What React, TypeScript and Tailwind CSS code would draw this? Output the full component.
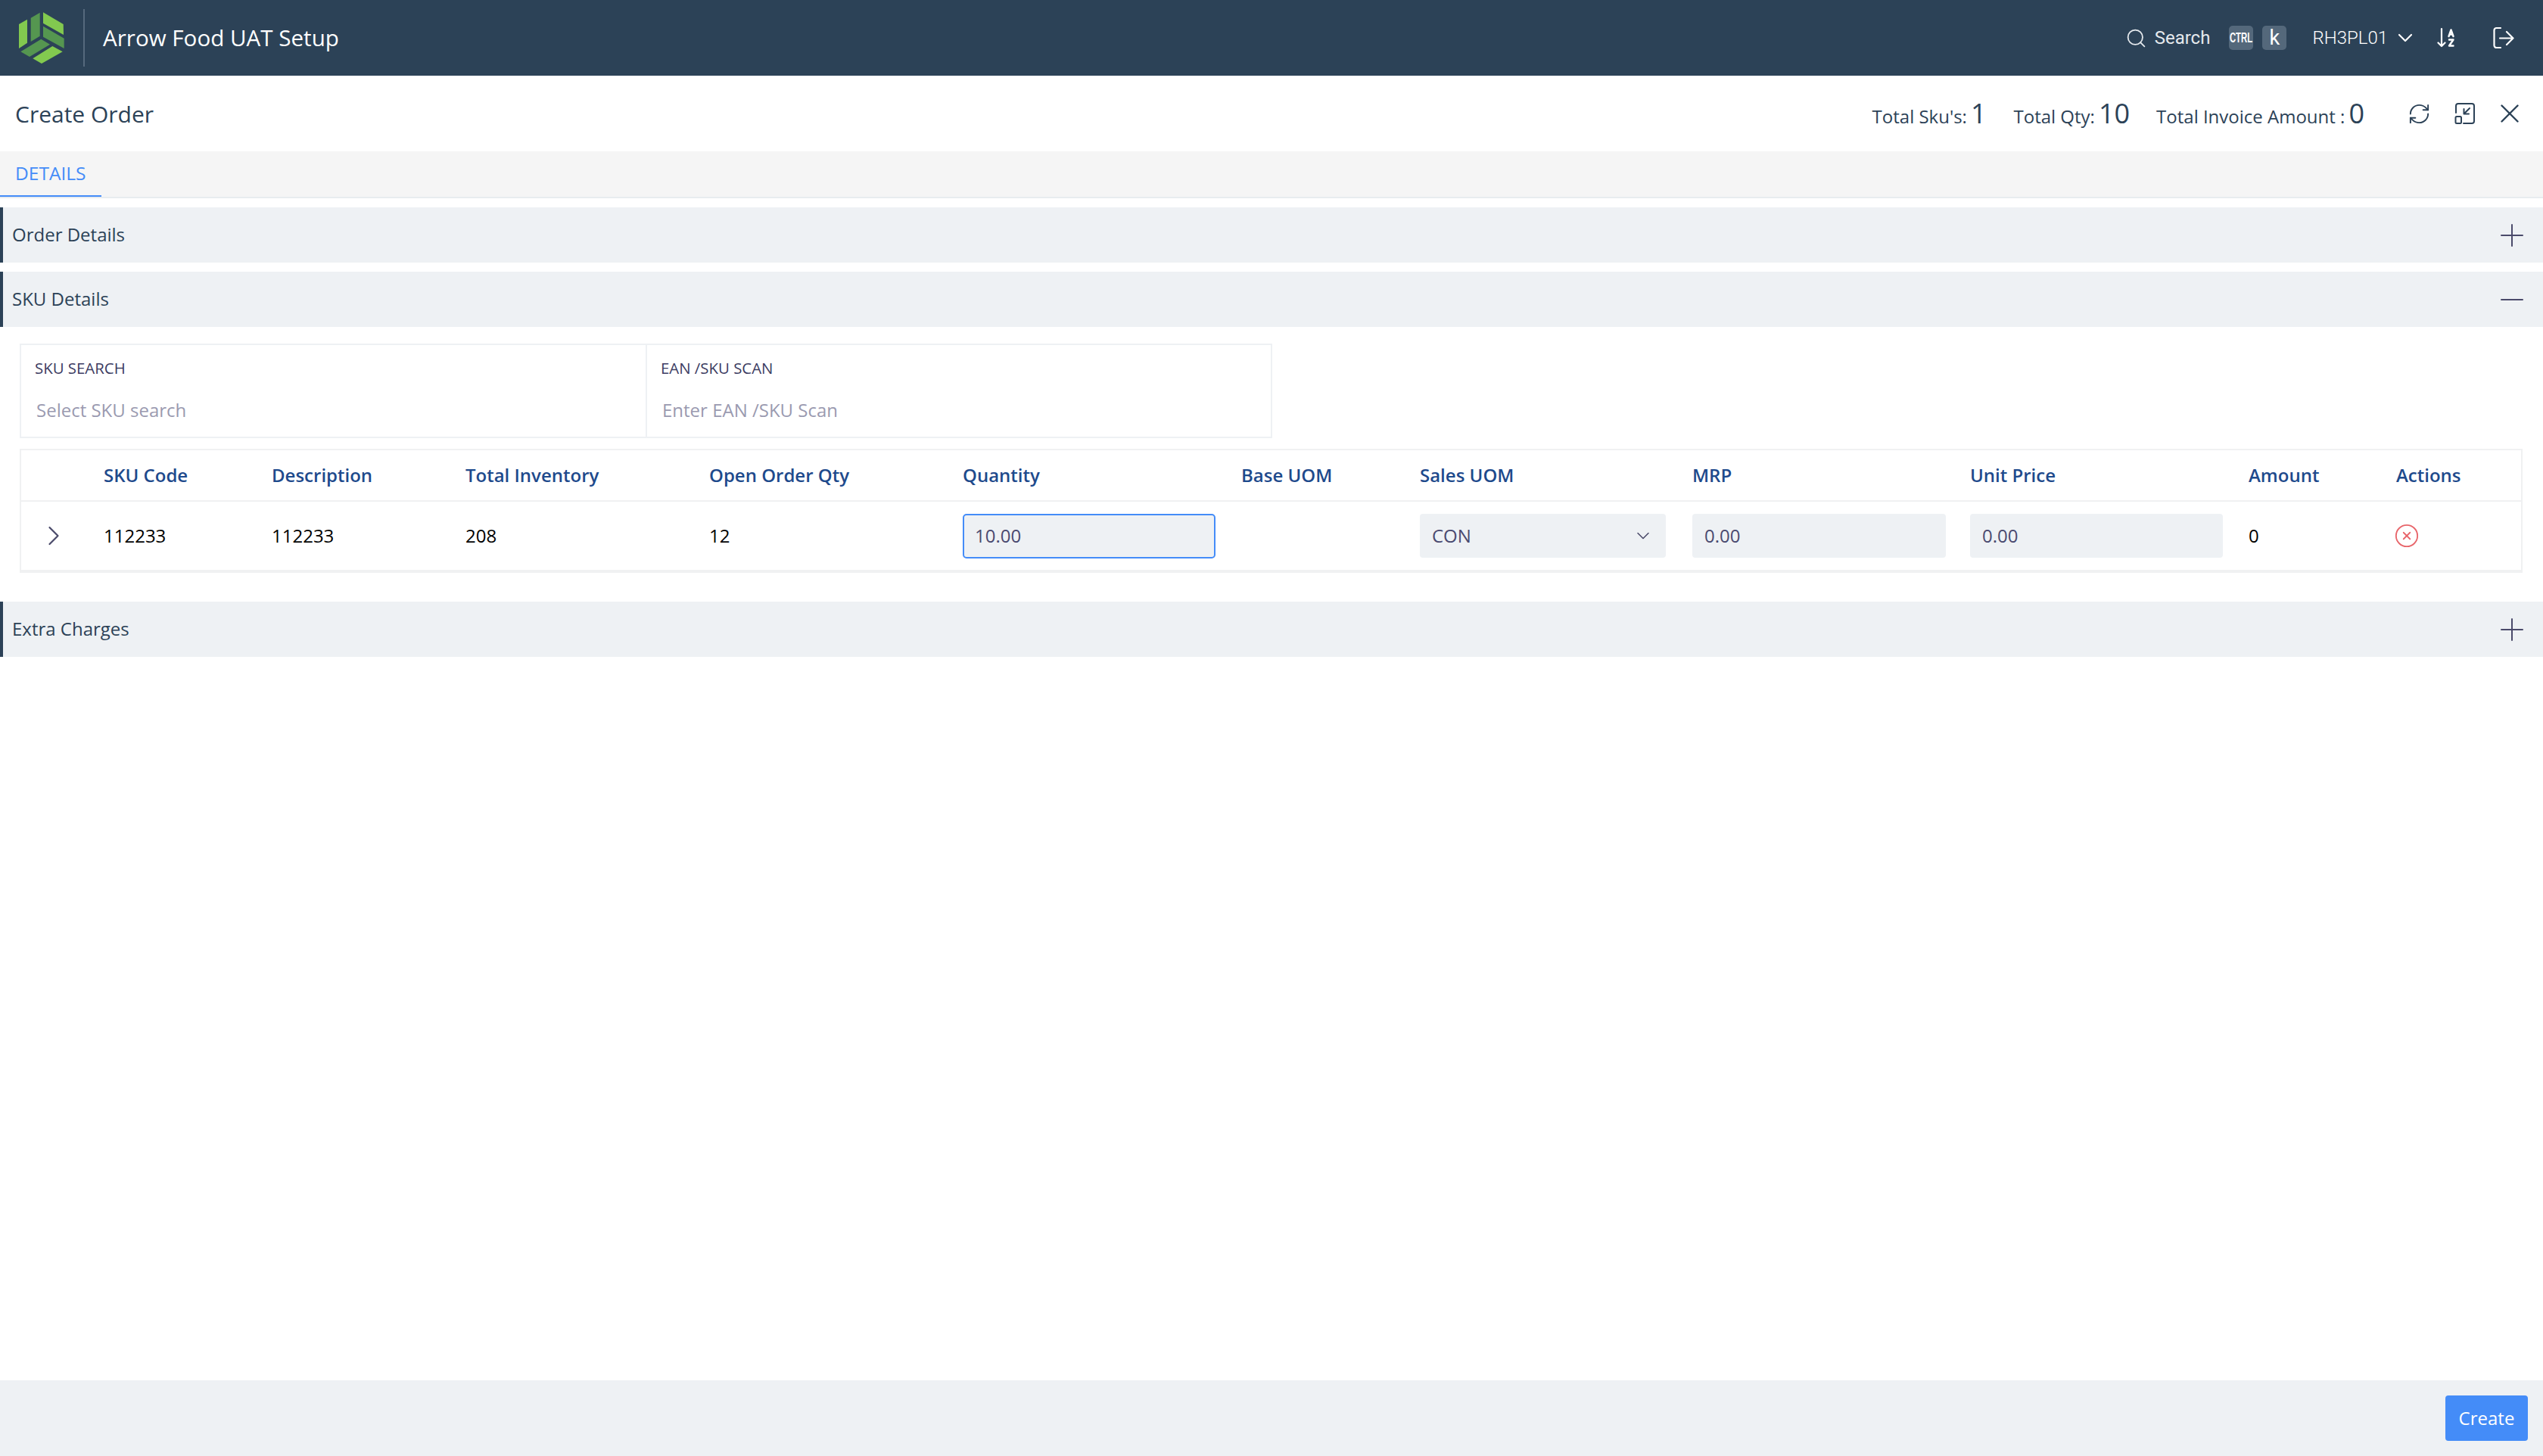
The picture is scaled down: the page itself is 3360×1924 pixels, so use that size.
import { ChevronDown, ChevronRight, Minus, Plus, RefreshCw, Search, X, CircleX } from 'lucide-react';

const gridCols =
  'grid grid-cols-[109px_222px_256px_322px_335px_368px_236px_360px_367px_368px_195px_1fr]';

function Logo() {
  return (
    <svg viewBox="24 16 62 69" className="ml-[24px] h-[69px] w-[62px] shrink-0">
      <polygon points="25,32 36,25.7 36,56.7 25,64" fill="#82c94f" />
      <polygon points="40.7,23.7 52.7,16.7 52.7,47.7 40.7,55" fill="#559650" />
      <polygon points="57,16.3 83.7,32 84,46 57,30.7" fill="#82c94f" />
      <polygon points="57,34.7 84.7,50.7 84.7,64 57,48.7" fill="#559650" />
      <polygon points="27.3,68.3 54.3,51.7 66,58.7 39,75" fill="#559650" />
      <polygon points="43.3,77.3 69.3,61 82.7,68.3 55,84" fill="#82c94f" />
    </svg>
  );
}

function SortIcon() {
  return (
    <svg viewBox="0 0 24 28" className="h-[28px] w-[24px]" fill="none" stroke="#fff" strokeWidth="2.2" strokeLinecap="round" strokeLinejoin="round">
      <path d="M6 2v23M1.5 20.5 6 25l4.5-4.5" />
      <path d="M15.5 12 18.500 3.500l3 8.500M16.500 9.500h4" strokeWidth="2.4" />
      <path d="M16 16.500h5.500l-5.500 8h5.500" strokeWidth="2.4" />
    </svg>
  );
}

function LogoutIcon() {
  return (
    <svg viewBox="0 0 28 30" className="h-[30px] w-[28px]" fill="none" stroke="#fff" strokeWidth="2.2" strokeLinecap="round" strokeLinejoin="round">
      <path d="M10 2H4.500A3 3 0 0 0 1.500 5v20a3 3 0 0 0 3 3H10" />
      <path d="M9 15.500h17.500M18 7l8.500 8.500L18 24" />
    </svg>
  );
}

function MinimizeIcon() {
  return (
    <svg viewBox="0 0 28 28" className="h-[28px] w-[28px]" fill="none" stroke="#2c4257" strokeWidth="2" strokeLinecap="round" strokeLinejoin="round">
      <path d="M2 13V4a3 3 0 0 1 3-3h18a3 3 0 0 1 3 3v20a3 3 0 0 1-3 3H12" />
      <rect x="1.500" y="18" width="7.500" height="9" rx="1.500" />
      <path d="M20 7l-7.500 7.500M12.500 8v6.500H19" />
    </svg>
  );
}

function SectionBar({ title, open }: { title: string; open?: boolean }) {
  return (
    <div className="flex h-[73px] items-center justify-between border-l-[4px] border-[#2c4257] bg-[#eef1f4] pr-[17px] pl-[12px]">
      <span className="-mt-[1px] text-[24px] font-medium text-[#2c4257]">{title}</span>
      {open ? (
        <Minus className="h-[48px] w-[48px] text-[#4a4a6a]" strokeWidth={1} />
      ) : (
        <Plus className="h-[48px] w-[48px] text-[#4a4a6a]" strokeWidth={1} />
      )}
    </div>
  );
}

function Stat({ label, value, className }: { label: string; value: string; className: string }) {
  return (
    <div className={`mt-[4px] flex items-baseline ${className}`}>
      <span className="text-[24px] text-[#2c4257]">{label}</span>
      <span className="ml-[5px] text-[36px] leading-none font-medium text-[#2c4257]">{value}</span>
    </div>
  );
}

function SearchField({ label, placeholder, className }: { label: string; placeholder: string; className: string }) {
  return (
    <div className={`flex flex-col pl-[18px] ${className}`}>
      <span className="mt-[18px] text-[20.400px] leading-[24px] font-medium text-[#3c3c62]">{label}</span>
      <span className="mt-[28px] pl-[2px] text-[24px] leading-[32px] text-[#9a9ab0]">{placeholder}</span>
    </div>
  );
}

export default function App() {
  const headers = ['', 'SKU Code', 'Description', 'Total Inventory', 'Open Order Qty', 'Quantity', 'Base UOM', 'Sales UOM', 'MRP', 'Unit Price', 'Amount', 'Actions'];

  return (
    <div className="flex h-screen flex-col bg-white font-['Open_Sans',sans-serif]">
      <header className="flex h-[100px] shrink-0 items-center bg-[#2c4257] text-white">
        <Logo />
        <div className="ml-[24px] h-[76px] w-[2px] bg-[#56697d]" />
        <span className="ml-[24px] text-[29.600px] font-normal">Arrow Food UAT Setup</span>
        <div className="ml-auto flex items-center pr-[38px]">
          <Search className="h-[29px] w-[29px] text-[#e5e9ed]" strokeWidth={1.500} />
          <span className="ml-[10px] font-['Roboto',sans-serif] text-[24px] text-[#e5e9ed]">Search</span>
          <span className="ml-[25px] flex h-[32px] w-[32px] items-center justify-center rounded-[5px] bg-[#54687b]">
            <span className="scale-x-[0.63] font-['Liberation_Sans',sans-serif] text-[18px] font-bold">CTRL</span>
          </span>
          <span className="ml-[12px] flex h-[32px] w-[32px] items-center justify-center rounded-[5px] bg-[#54687b] font-['Roboto',sans-serif] text-[27px]">k</span>
          <span className="ml-[34px] font-['Roboto',sans-serif] text-[24px] font-light">RH3PL01</span>
          <ChevronDown className="ml-[7px] h-[32px] w-[32px]" strokeWidth={1.600} />
          <div className="ml-[26px]"><SortIcon /></div>
          <div className="ml-[50px]"><LogoutIcon /></div>
        </div>
      </header>

      <div className="flex h-[100px] shrink-0 items-center pr-[23px] pl-[20px]">
        <h1 className="text-[30px] font-medium text-[#2c4257]">Create Order</h1>
        <Stat className="ml-auto" label="Total Sku's:" value="1" />
        <Stat className="ml-[36px]" label="Total Qty:" value="10" />
        <Stat className="ml-[35px]" label="Total Invoice Amount :" value="0" />
        <RefreshCw className="ml-[57px] h-[31px] w-[31px] text-[#2c4257]" strokeWidth={1.500} />
        <div className="ml-[31px]"><MinimizeIcon /></div>
        <X className="ml-[24px] h-[42px] w-[42px] text-[#2c4257]" strokeWidth={1.400} />
      </div>

      <div className="flex h-[62px] shrink-0 border-b-[2px] border-[#e8ecef] bg-[#f5f5f5]">
        <div className="flex h-[60px] w-[134px] items-center border-b-[2px] border-[#448cf8] pl-[20px] text-[24.500px] font-medium text-[#448cf8]">DETAILS</div>
      </div>

      <div className="mt-[12px] flex flex-col gap-[12px]">
        <SectionBar title="Order Details" />
        <SectionBar title="SKU Details" open />
      </div>

      <div className="mt-[22px] ml-[26px] flex h-[125px] w-[1655px] border-[2px] border-[#eef1f4]">
        <SearchField className="w-[827px] border-r-[2px] border-[#eef1f4]" label="SKU SEARCH" placeholder="Select SKU search" />
        <SearchField className="flex-1" label="EAN /SKU SCAN" placeholder="Enter EAN /SKU Scan" />
      </div>

      <div className="mt-[14px] mr-[27px] ml-[26px] border-x-[2px] border-t-[2px] border-b-[4px] border-[#f0f1f2]">
        <div className={`${gridCols} h-[68px] items-center border-b-[2px] border-[#f0f1f2] text-[24px] font-semibold text-[#1e4a8c]`}>
          {headers.map((h) => (
            <span key={h}>{h}</span>
          ))}
        </div>
        <div className={`${gridCols} h-[90px] items-center text-[24px] text-black`}>
          <ChevronRight className="ml-[21px] h-[44px] w-[44px] text-[#4a4a6a]" strokeWidth={1.200} />
          <span>112233</span>
          <span>112233</span>
          <span>208</span>
          <span>12</span>
          <div className="flex h-[59px] w-[334px] items-center rounded-[5px] border-[2px] border-[#448cf8] bg-[#eef1f4] pl-[14px] text-[#4a4a70]">10.00</div>
          <span />
          <div className="flex h-[58px] w-[325px] items-center justify-between rounded-[4px] bg-[#eef1f4] pr-[16px] pl-[16px] text-[#4a4a70]">
            CON
            <ChevronDown className="h-[28px] w-[28px] text-[#4a4a6a]" strokeWidth={1.300} />
          </div>
          <div className="flex h-[58px] w-[335px] items-center rounded-[4px] bg-[#eef1f4] pl-[16px] text-[#4a4a70]">0.00</div>
          <div className="flex h-[58px] w-[334px] items-center rounded-[4px] bg-[#eef1f4] pl-[16px] text-[#4a4a70]">0.00</div>
          <span>0</span>
          <CircleX className="-ml-[3px] h-[34px] w-[34px] text-[#e8666b]" strokeWidth={1.300} />
        </div>
      </div>

      <div className="mt-[38px]">
        <SectionBar title="Extra Charges" />
      </div>

      <footer className="mt-auto flex h-[100px] shrink-0 items-center justify-end bg-[#eef1f4] pr-[20px]">
        <button className="h-[60px] w-[109px] rounded-[4px] bg-[#448cf8] text-[24px] text-white">Create</button>
      </footer>
    </div>
  );
}
